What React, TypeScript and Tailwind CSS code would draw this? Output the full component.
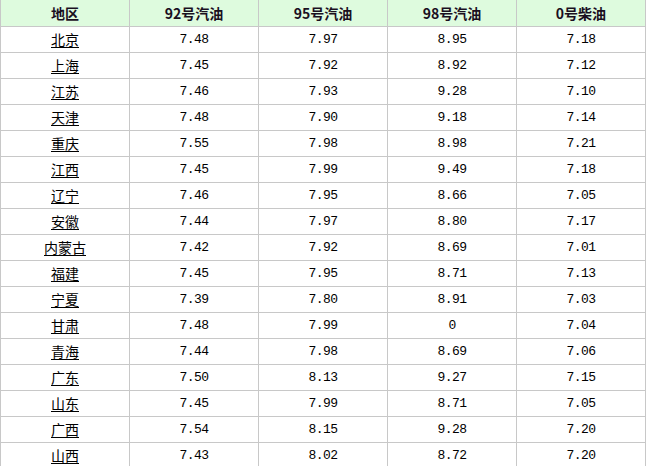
import React from "react";

const rows: [string, string, string, string, string][] = [
  ["北京", "7.48", "7.97", "8.95", "7.18"],
  ["上海", "7.45", "7.92", "8.92", "7.12"],
  ["江苏", "7.46", "7.93", "9.28", "7.10"],
  ["天津", "7.48", "7.90", "9.18", "7.14"],
  ["重庆", "7.55", "7.98", "8.98", "7.21"],
  ["江西", "7.45", "7.99", "9.49", "7.18"],
  ["辽宁", "7.46", "7.95", "8.66", "7.05"],
  ["安徽", "7.44", "7.97", "8.80", "7.17"],
  ["内蒙古", "7.42", "7.92", "8.69", "7.01"],
  ["福建", "7.45", "7.95", "8.71", "7.13"],
  ["宁夏", "7.39", "7.80", "8.91", "7.03"],
  ["甘肃", "7.48", "7.99", "0", "7.04"],
  ["青海", "7.44", "7.98", "8.69", "7.06"],
  ["广东", "7.50", "8.13", "9.27", "7.15"],
  ["山东", "7.45", "7.99", "8.71", "7.05"],
  ["广西", "7.54", "8.15", "9.28", "7.20"],
  ["山西", "7.43", "8.02", "8.72", "7.20"],
];

const headers = ["地区", "92号汽油", "95号汽油", "98号汽油", "0号柴油"];

const cjk = "font-['Noto_Sans_CJK_SC','Noto_Sans',sans-serif]";
const mono = "font-['Liberation_Mono','Noto_Sans_CJK_SC',monospace]";

export default function App() {
  return (
    <div className="w-[646px] h-[466px] overflow-hidden bg-white">
      <div className="grid grid-cols-[repeat(5,129px)] border-l border-[#c8c8c8] w-[646px]">
        {headers.map((h) => (
          <div
            key={h}
            className={`h-[27px] bg-[#defbde] border-r border-b border-[#c8c8c8] flex items-center justify-center text-[14px] font-bold text-[#1a0f1f] ${cjk}`}
          >
            {h}
          </div>
        ))}
        {rows.map((r) => (
          <React.Fragment key={r[0]}>
            <div
              className={`h-[26px] border-r border-b border-[#c8c8c8] flex items-center justify-center text-[14px] text-black ${cjk}`}
            >
              <span className="underline underline-offset-2 decoration-1">{r[0]}</span>
            </div>
            {r.slice(1).map((v, i) => (
              <div
                key={i}
                className={`h-[26px] border-r border-b border-[#c8c8c8] flex items-center justify-center text-[13px] tracking-[-0.6px] text-black ${mono}`}
              >
                {v}
              </div>
            ))}
          </React.Fragment>
        ))}
      </div>
    </div>
  );
}
